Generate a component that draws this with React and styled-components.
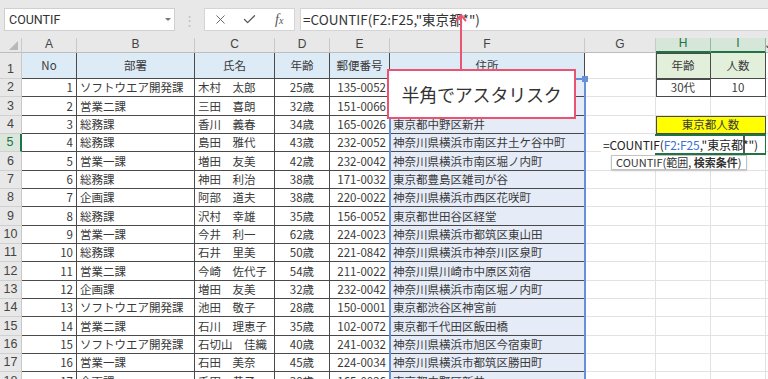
import React from 'react'
import styled, { createGlobalStyle } from 'styled-components'
import { X, Check } from 'lucide-react'

const JP = `"Noto Sans CJK JP", "Noto Sans", sans-serif`

const Global = createGlobalStyle`
  html, body {
    margin: 0;
    padding: 0;
    background: #fff;
  }
  body {
    font-family: ${JP};
  }
`

const cols = ['A', 'B', 'C', 'D', 'E', 'F', 'G', 'H', 'I', 'J']

const rows = [
  [1, 'ソフトウエア開発課', '木村　太郎', '25歳', '135-0052', '東京都江東区東陽'],
  [2, '営業二課', '三田　喜朗', '32歳', '151-0066', '東京都渋谷区西原'],
  [3, '総務課', '香川　義春', '34歳', '165-0026', '東京都中野区新井'],
  [4, '総務課', '島田　雅代', '43歳', '232-0052', '神奈川県横浜市南区井土ケ谷中町'],
  [5, '営業一課', '増田　友美', '42歳', '232-0042', '神奈川県横浜市南区堀ノ内町'],
  [6, '総務課', '神田　利治', '38歳', '171-0032', '東京都豊島区雑司が谷'],
  [7, '企画課', '阿部　道夫', '38歳', '220-0022', '神奈川県横浜市西区花咲町'],
  [8, '総務課', '沢村　幸雄', '35歳', '156-0052', '東京都世田谷区経堂'],
  [9, '営業一課', '今井　利一', '62歳', '224-0023', '神奈川県横浜市都筑区東山田'],
  [10, '総務課', '石井　里美', '50歳', '221-0842', '神奈川県横浜市神奈川区泉町'],
  [11, '営業二課', '今崎　佐代子', '54歳', '211-0022', '神奈川県川崎市中原区苅宿'],
  [12, '企画課', '増田　友美', '32歳', '232-0042', '神奈川県横浜市南区堀ノ内町'],
  [13, 'ソフトウエア開発課', '池田　敬子', '28歳', '150-0001', '東京都渋谷区神宮前'],
  [14, '営業二課', '石川　理恵子', '35歳', '102-0072', '東京都千代田区飯田橋'],
  [15, 'ソフトウエア開発課', '石切山　佳織', '40歳', '241-0032', '神奈川県横浜市旭区今宿東町'],
  [16, '営業一課', '石田　美奈', '45歳', '224-0034', '神奈川県横浜市都筑区勝田町'],
  [17, '企画課', '千田　恭子', '30歳', '165-0026', '東京都中野区新井'],
]

const App = () => {
  return (
    <>
      <Global />
      <Window>
        <Toolbar>
          <NameBox>
            COUNTIF
            <DropArrow />
          </NameBox>
          <Grip>⋮</Grip>
          <FxBox>
            <X size={15} strokeWidth={1.4} color="#555" />
            <Check size={15} strokeWidth={2} color="#555" />
            <Fx>
              f<small>x</small>
            </Fx>
          </FxBox>
          <FormulaInput>=COUNTIF(F2:F25,"東京都*")</FormulaInput>
        </Toolbar>

        <Sheet>
          <Corner>
            <CornerTri />
          </Corner>
          {cols.map((c) => (
            <ColHead key={c} $active={c === 'H' || c === 'I'}>
              {c}
            </ColHead>
          ))}

          <RowHead>1</RowHead>
          <Cell $dark $bg="#ddebf7" $align="center" $mid>No</Cell>
          <Cell $dark $bg="#ddebf7" $align="center" $mid>部署</Cell>
          <Cell $dark $bg="#ddebf7" $align="center" $mid>氏名</Cell>
          <Cell $dark $bg="#ddebf7" $align="center" $mid>年齢</Cell>
          <Cell $dark $bg="#ddebf7" $align="center" $mid>郵便番号</Cell>
          <Cell $dark $bg="#ddebf7" $align="center" $mid>住所</Cell>
          <Cell />
          <Cell $dark $boxed $bg="#e2efda" $align="center" $mid>年齢</Cell>
          <Cell $dark $bg="#e2efda" $align="center" $mid>人数</Cell>
          <Cell />

          {rows.map((r, i) => {
            const n = i + 2
            return (
              <React.Fragment key={n}>
                <RowHead $active={n === 5}>{n}</RowHead>
                <Cell $dark $align="flex-end">{r[0]}</Cell>
                <Cell $dark>{r[1]}</Cell>
                <Cell $dark>{r[2]}</Cell>
                <Cell $dark $align="center">{r[3]}</Cell>
                <Cell $dark $align="flex-end">{r[4]}</Cell>
                <Cell $dark $bg="#e5ebf7">{r[5]}</Cell>
                <Cell />
                {n === 2 && (
                  <>
                    <Cell $dark $boxed $align="center">30代</Cell>
                    <Cell $dark $align="center">10</Cell>
                  </>
                )}
                {n === 4 && (
                  <Cell $dark $boxed $span={2} $bg="#ffff00" $align="center">
                    東京都人数
                  </Cell>
                )}
                {n === 5 && <Cell $span={2} />}
                {n !== 2 && n !== 4 && n !== 5 && (
                  <>
                    <Cell />
                    <Cell />
                  </>
                )}
                <Cell />
              </React.Fragment>
            )
          })}
        </Sheet>

        <RangeMark />
        <RangeHandle />

        <ActiveCell />
        <EditBox>
          =COUNTIF(<Ref>F2:F25</Ref>,"東京都<Caret />*")
        </EditBox>
        <Tip>
          COUNTIF(範囲, <b>検索条件</b>)
        </Tip>

        <Arrow width="14" height="60" viewBox="0 0 14 60">
          <line x1="7" y1="3" x2="7" y2="58" stroke="#ea5470" strokeWidth="2" />
          <polyline points="2,9 7,3 12,9" fill="none" stroke="#ea5470" strokeWidth="2" />
        </Arrow>
        <Callout>半角でアスタリスク</Callout>
      </Window>
    </>
  )
}

const Window = styled.div`
  position: relative;
  width: 768px;
  height: 379px;
  overflow: hidden;
  background: #e8e8e8;
  font-family: ${JP};
`

const Toolbar = styled.div`
  display: flex;
  align-items: flex-start;
  height: 38px;
  padding: 8px 0 0 4px;
  box-sizing: border-box;
  background: #e8e8e8;
`

const NameBox = styled.div`
  position: relative;
  width: 171px;
  height: 23px;
  box-sizing: border-box;
  background: #fff;
  border: 1px solid #cfcfcf;
  padding-left: 4px;
  font-family: "Roboto", "Liberation Sans", sans-serif;
  font-size: 12.5px;
  line-height: 21px;
  color: #333;
`

const DropArrow = styled.span`
  position: absolute;
  right: 3px;
  top: 9px;
  border-left: 3px solid transparent;
  border-right: 3px solid transparent;
  border-top: 3px solid #777;
`

const Grip = styled.div`
  width: 29px;
  text-align: center;
  color: #c0c0c0;
  font-size: 13px;
  line-height: 23px;
`

const FxBox = styled.div`
  display: flex;
  align-items: center;
  gap: 14px;
  width: 91px;
  height: 23px;
  box-sizing: border-box;
  padding-left: 8px;
  background: #fff;
  border: 1px solid #d4d4d4;
`

const Fx = styled.span`
  font-family: "Liberation Serif", serif;
  font-style: italic;
  font-size: 14px;
  color: #555;
  margin-left: 4px;

  small {
    font-size: 10px;
  }
`

const FormulaInput = styled.div`
  flex: 1;
  height: 23px;
  margin-left: 5px;
  box-sizing: border-box;
  background: #fff;
  border: 1px solid #d4d4d4;
  border-right: none;
  padding-left: 2px;
  font-size: 13.5px;
  line-height: 21px;
  color: #333;
  white-space: nowrap;
`

const Sheet = styled.div`
  display: grid;
  grid-template-columns: 22px 55px 118px 80px 55px 60px 195px 71px 55px 55px 1fr;
  grid-template-rows: 15px 26px repeat(17, 18.33px);
  background: #fff;
`

const Corner = styled.div`
  position: relative;
  background: #e8e8e8;
  border-right: 1px solid #c9c9c9;
  border-bottom: 1px solid #bdbdbd;
`

const CornerTri = styled.span`
  position: absolute;
  right: 3px;
  bottom: 2px;
  width: 0;
  height: 0;
  border-left: 9px solid transparent;
  border-bottom: 9px solid #b8b8b8;
`

const ColHead = styled.div`
  display: flex;
  align-items: flex-end;
  justify-content: center;
  box-sizing: border-box;
  padding-bottom: 1px;
  font-family: "Liberation Sans", Arial, sans-serif;
  font-size: 12px;
  line-height: 13px;
  color: ${(p) => (p.$active ? '#217346' : '#444')};
  background: ${(p) => (p.$active ? '#d6e6d8' : '#e8e8e8')};
  border-right: 1px solid ${(p) => (p.$active ? '#8fbc9a' : '#c9c9c9')};
  border-bottom: ${(p) => (p.$active ? '2px solid #217346' : '1px solid #bdbdbd')};
`

const RowHead = styled.div`
  display: flex;
  align-items: flex-end;
  justify-content: center;
  box-sizing: border-box;
  padding-bottom: 1px;
  font-family: "Liberation Sans", Arial, sans-serif;
  font-size: 12.5px;
  line-height: 15px;
  color: ${(p) => (p.$active ? '#217346' : '#444')};
  background: ${(p) => (p.$active ? '#dbe7dc' : '#e8e8e8')};
  border-right: ${(p) => (p.$active ? '2px solid #217346' : '1px solid #c9c9c9')};
  border-bottom: 1px solid #d0d0d0;
`

const Cell = styled.div`
  display: flex;
  align-items: ${(p) => (p.$mid ? 'center' : 'flex-end')};
  justify-content: ${(p) => p.$align || 'flex-start'};
  box-sizing: border-box;
  min-width: 0;
  padding: 0 3px 1px;
  overflow: hidden;
  white-space: nowrap;
  font-size: 11.5px;
  line-height: 16px;
  color: #3a3a3a;
  background: ${(p) => p.$bg || '#fff'};
  border-right: 1px solid ${(p) => (p.$dark ? '#4a4a4a' : '#e2e2e2')};
  border-bottom: 1px solid ${(p) => (p.$dark ? '#4a4a4a' : '#e2e2e2')};
  ${(p) => p.$span && `grid-column: span ${p.$span};`}
  ${(p) => p.$boxed && 'box-shadow: inset 1px 1px 0 #4a4a4a;'}
`

const RangeMark = styled.div`
  position: absolute;
  left: 389px;
  top: 78px;
  width: 197px;
  height: 320px;
  box-sizing: border-box;
  border: 2px solid #6690da;
`

const RangeHandle = styled.div`
  position: absolute;
  left: 582px;
  top: 76px;
  width: 6px;
  height: 6px;
  background: #6690da;
`

const ActiveCell = styled.div`
  position: absolute;
  left: 655px;
  top: 134px;
  width: 111px;
  height: 21px;
  box-sizing: border-box;
  border: 2px solid #217346;
`

const EditBox = styled.div`
  position: absolute;
  left: 601px;
  top: 136px;
  width: 164px;
  height: 17px;
  padding-left: 2px;
  box-sizing: border-box;
  background: #fff;
  font-size: 12px;
  letter-spacing: -0.1px;
  line-height: 17px;
  color: #222;
  white-space: nowrap;
`

const Ref = styled.span`
  color: #3b6fd4;
`

const Caret = styled.span`
  display: inline-block;
  width: 2px;
  height: 17px;
  margin-right: -2px;
  vertical-align: top;
  background: #555;
`

const Tip = styled.div`
  position: absolute;
  left: 611px;
  top: 155px;
  height: 15px;
  padding: 0 4px;
  box-sizing: border-box;
  background: #fff;
  border: 1px solid #c3c3c3;
  box-shadow: 0 1px 2px rgba(0, 0, 0, 0.15);
  font-size: 11px;
  line-height: 13px;
  color: #333;
  white-space: nowrap;

  b {
    font-weight: 700;
  }
`

const Arrow = styled.svg`
  position: absolute;
  left: 454px;
  top: 12px;
`

const Callout = styled.div`
  position: absolute;
  left: 387px;
  top: 69px;
  width: 189px;
  height: 50px;
  box-sizing: border-box;
  display: flex;
  align-items: center;
  justify-content: center;
  background: #fff;
  border: 2px solid #ea5470;
  font-size: 18px;
  color: #333;
  letter-spacing: -0.2px;
`

export default App
